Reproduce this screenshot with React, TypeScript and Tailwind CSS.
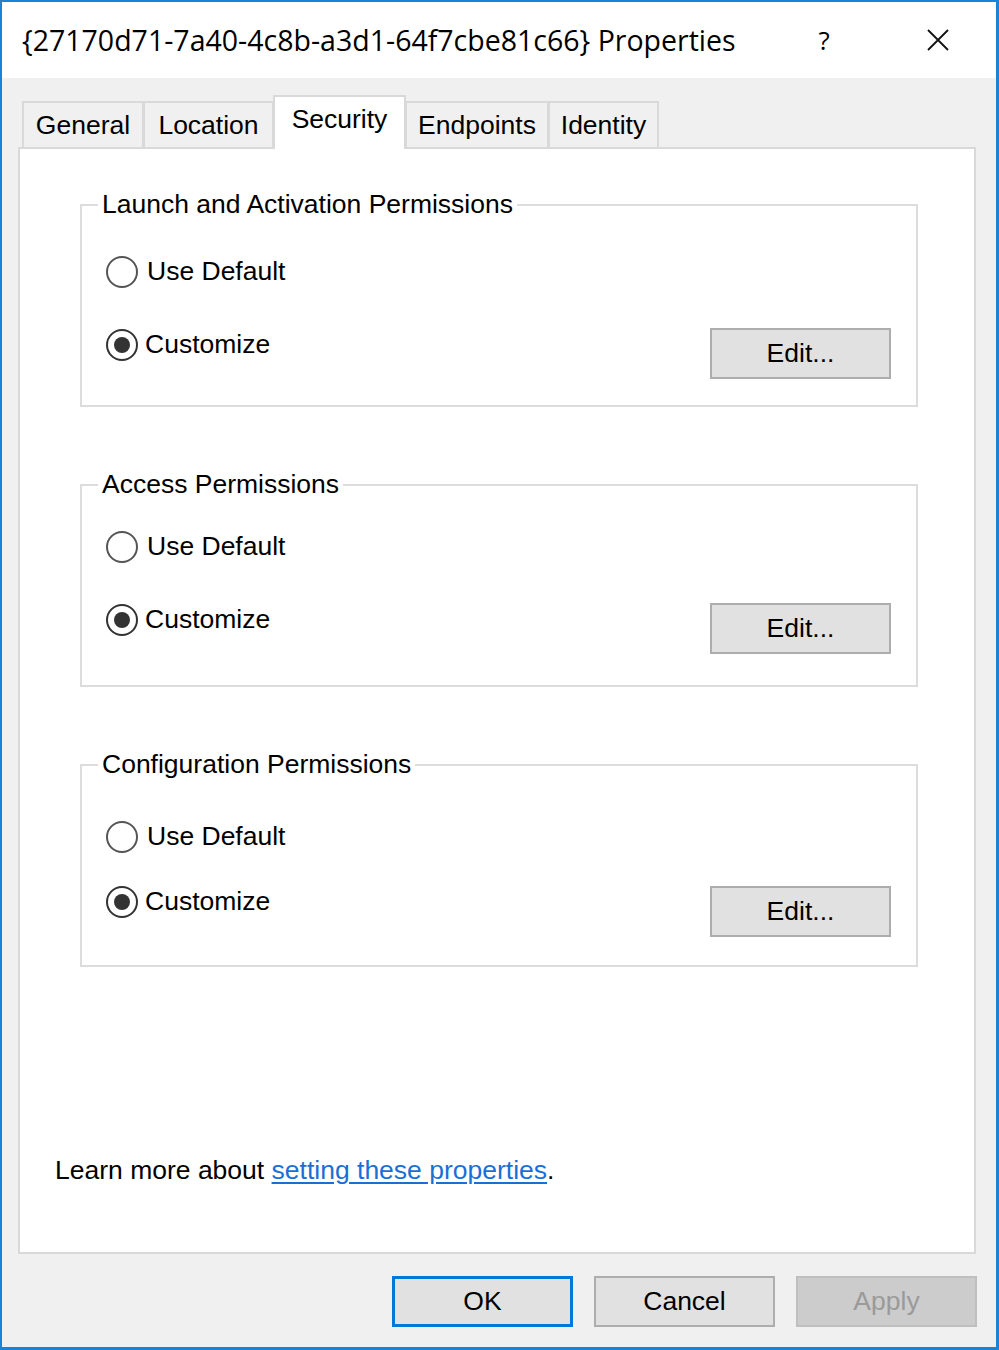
import React from "react"

const tabs = [
  { name: "General", w: "w-[122px]" },
  { name: "Location", w: "w-[131px]" },
  { name: "Security", w: "w-[133px]", active: true },
  { name: "Endpoints", w: "w-[144px]" },
  { name: "Identity", w: "w-[111px]" },
]

function Radio({ checked, label }: { checked?: boolean; label: string }) {
  return (
    <div className="flex h-[36px] items-center">
      <span
        className={`flex h-[32px] w-[32px] items-center justify-center rounded-full border-2 bg-white ${
          checked ? "border-[#333333]" : "border-[#555555]"
        }`}
      >
        {checked && <span className="h-[16px] w-[16px] rounded-full bg-[#333333]" />}
      </span>
      <span className={checked ? "ml-[7px]" : "ml-[9px]"}>{label}</span>
    </div>
  )
}

function PermGroup({
  title,
  pad,
  gap,
  btn,
}: {
  title: string
  pad: string
  gap: string
  btn: string
}) {
  return (
    <div className={`relative h-[203px] border-2 border-[#dcdcdc] px-[24px] ${pad}`}>
      <span className="absolute -top-[17px] left-[16px] bg-white px-[4px] leading-[30px]">{title}</span>
      <Radio label="Use Default" />
      <div className={`flex items-start justify-between ${gap}`}>
        <Radio checked label="Customize" />
        <button
          className={`mr-[1px] flex h-[51px] w-[181px] items-center justify-center border-2 border-[#adadad] bg-[#e1e1e1] ${btn}`}
        >
          Edit...
        </button>
      </div>
    </div>
  )
}

export default function App() {
  return (
    <div className="h-[1350px] w-[999px] overflow-hidden border-2 border-r-[3px] border-b-[3px] border-[#1883d7] bg-[#f0f0f0] font-['Liberation_Sans',Arial,sans-serif] text-[26.5px] text-black">
      <div className="flex h-[76px] items-center bg-white pl-[20px] font-['Open_Sans',sans-serif] text-[28.5px]">
        <span className="w-[782px]">{"{27170d71-7a40-4c8b-a3d1-64f7cbe81c66} Properties"}</span>
        <span className="w-[40px] text-center text-[26px]">?</span>
        <span className="ml-[74px] flex h-[40px] w-[40px] items-center justify-center">
          <svg width="22" height="22" viewBox="0 0 22 22">
            <path d="M1 1L21 21M21 1L1 21" stroke="#111" strokeWidth="1.8" />
          </svg>
        </span>
      </div>

      <div className="px-[16px] pt-[17px]">
        <div className="flex h-[52px] items-end pl-[4px]">
          {tabs.map((t) =>
            t.active ? (
              <div
                key={t.name}
                className={`${t.w} relative z-10 -mb-[2px] -ml-[1px] flex h-[54px] items-center justify-center border-x-2 border-t-2 border-[#d9d9d9] bg-white pb-[6px]`}
              >
                {t.name}
              </div>
            ) : (
              <div
                key={t.name}
                className={`${t.w} -ml-[1px] flex h-[46px] items-center justify-center border-x-2 border-t-2 border-[#d9d9d9] bg-[#f0f0f0] pt-[2px] first:ml-0`}
              >
                {t.name}
              </div>
            )
          )}
        </div>

        <div className="h-[1107px] w-[958px] border-2 border-[#d9d9d9] bg-white pt-[55px]">
          <div className="ml-[60px] flex w-[838px] flex-col gap-[77px]">
            <PermGroup title="Launch and Activation Permissions" pad="pt-[48px]" gap="mt-[37px]" btn="mt-[1px]" />
            <PermGroup title="Access Permissions" pad="pt-[43px]" gap="mt-[37px]" btn="mt-[1px]" />
            <PermGroup title="Configuration Permissions" pad="pt-[53px]" gap="mt-[29px]" btn="mt-[2px]" />
          </div>
          <p className="ml-[35px] mt-[188px] leading-[30px]">
            Learn more about{" "}
            <a href="#" className="text-[#1a6fd6] underline underline-offset-[3px]">
              setting these properties
            </a>
            .
          </p>
        </div>

        <div className="mt-[22px] flex justify-end gap-[21px] pr-[3px]">
          <button className="flex h-[51px] w-[181px] items-center justify-center border-[3px] border-[#0078d7] bg-[#e1e1e1]">
            OK
          </button>
          <button className="flex h-[51px] w-[181px] items-center justify-center border-2 border-[#adadad] bg-[#e1e1e1]">
            Cancel
          </button>
          <button className="flex h-[51px] w-[181px] items-center justify-center border-2 border-[#bfbfbf] bg-[#cccccc] text-[#9a9a9a]">
            Apply
          </button>
        </div>
      </div>
    </div>
  )
}
